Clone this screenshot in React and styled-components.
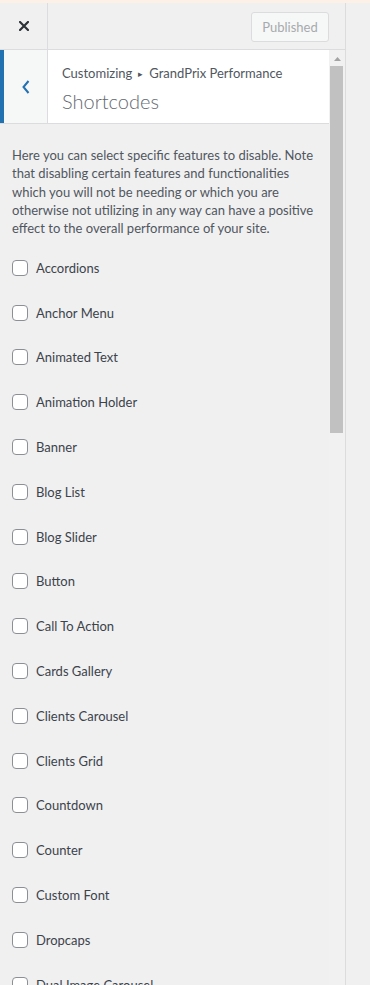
import React from "react";
import styled, { createGlobalStyle } from "styled-components";

const GlobalStyle = createGlobalStyle`
  html, body {
    margin: 0;
    padding: 0;
    background: #f0f0f1;
    overflow: hidden;
  }
  body {
    font-family: Lato, "Liberation Sans", sans-serif;
    -webkit-font-smoothing: antialiased;
  }
  * { box-sizing: border-box; }
`;

const Page = styled.div`
  display: flex;
  flex-direction: column;
  width: 370px;
  height: 985px;
  overflow: hidden;
  background: #f0f0f1;
`;

const TopStrip = styled.div`
  height: 3px;
  flex: none;
  background: #fcf0e7;
`;

const Main = styled.div`
  display: flex;
  flex: 1;
  min-height: 0;
`;

const Sidebar = styled.aside`
  width: 346px;
  flex: none;
  display: flex;
  flex-direction: column;
  border-right: 1px solid #dcdcde;
  background: #f0f0f1;
`;

const Preview = styled.div`
  flex: 1;
  background: #f0f0f1;
`;

const Header = styled.header`
  height: 47px;
  flex: none;
  display: flex;
  align-items: stretch;
  border-bottom: 1px solid #dcdcde;
`;

const CloseButton = styled.button`
  width: 48px;
  border: none;
  border-right: 1px solid #dcdcde;
  background: transparent;
  padding: 0;
  display: flex;
  align-items: center;
  justify-content: center;
  color: #1d2327;
  cursor: pointer;
`;

const HeaderActions = styled.div`
  flex: 1;
  display: flex;
  align-items: center;
  justify-content: flex-end;
  padding-right: 16px;
`;

const PublishedButton = styled.button`
  width: 78px;
  height: 30px;
  margin-top: 2px;
  border: 1px solid #dcdcde;
  border-radius: 3px;
  background: #f6f7f7;
  color: #a7aaad;
  font-family: inherit;
  font-size: 13px;
  padding: 0;
`;

const Body = styled.div`
  flex: 1;
  min-height: 0;
  display: flex;
`;

const Content = styled.div`
  width: 329px;
  flex: none;
  display: flex;
  flex-direction: column;
`;

const SectionTitle = styled.div`
  height: 74px;
  flex: none;
  display: flex;
  background: #fff;
  border-bottom: 1px solid #dcdcde;
`;

const BackButton = styled.button`
  width: 48px;
  flex: none;
  border: none;
  border-left: 4px solid #2271b1;
  border-right: 1px solid #dcdcde;
  background: #f6f7f7;
  display: flex;
  align-items: center;
  justify-content: center;
  padding: 0;
  color: #2271b1;
`;

const TitleText = styled.div`
  flex: 1;
  display: flex;
  flex-direction: column;
  justify-content: flex-start;
  padding: 14px 0 0 14px;
`;

const Breadcrumb = styled.span`
  font-size: 13px;
  line-height: 18px;
  color: #50575e;
`;

const Arrow = styled.span`
  font-size: 9px;
  margin: 0 6px 0 6px;
  position: relative;
  top: -1px;
`;

const Heading = styled.h3`
  margin: 4px 0 0;
  font-size: 20px;
  line-height: 26px;
  font-weight: 300;
  color: #646970;
`;

const Description = styled.p`
  margin: 22px 12px 8px;
  font-size: 13px;
  line-height: 18.3px;
  color: #50575e;
`;

const OptionList = styled.ul`
  list-style: none;
  margin: 0;
  padding: 0 12px;
`;

const Option = styled.li`
  height: 44.8px;
  display: flex;
  align-items: center;
`;

const Box = styled.span`
  width: 16px;
  height: 16px;
  flex: none;
  border: 1px solid #8c8f94;
  border-radius: 4px;
  background: #fff;
`;

const OptionLabel = styled.label`
  margin-left: 8px;
  font-size: 13px;
  color: #3c434a;
`;

const Scrollbar = styled.div`
  width: 16px;
  flex: none;
  display: flex;
  flex-direction: column;
  align-items: flex-start;
  background: #f1f1f1;
`;

const ScrollArrow = styled.div`
  width: 16px;
  height: 16px;
  flex: none;
  display: flex;
  align-items: center;
  justify-content: center;
  padding-top: 1px;
`;

const Thumb = styled.div`
  width: 13px;
  height: 367px;
  margin-left: 1px;
  background: #c1c1c1;
`;

const options = [
  "Accordions",
  "Anchor Menu",
  "Animated Text",
  "Animation Holder",
  "Banner",
  "Blog List",
  "Blog Slider",
  "Button",
  "Call To Action",
  "Cards Gallery",
  "Clients Carousel",
  "Clients Grid",
  "Countdown",
  "Counter",
  "Custom Font",
  "Dropcaps",
  "Dual Image Carousel",
];

export default function App() {
  return (
    <>
      <GlobalStyle />
      <Page>
        <TopStrip />
        <Main>
          <Sidebar>
            <Header>
              <CloseButton aria-label="Close">
                <svg width="10" height="10" viewBox="0 0 10 10">
                  <path d="M1 1 L9 9 M9 1 L1 9" stroke="#2c3338" strokeWidth="2.2" strokeLinecap="square" />
                </svg>
              </CloseButton>
              <HeaderActions>
                <PublishedButton disabled>Published</PublishedButton>
              </HeaderActions>
            </Header>
            <Body>
              <Content>
                <SectionTitle>
                  <BackButton aria-label="Back">
                    <svg width="8" height="14" viewBox="0 0 8 14">
                      <path d="M6.5 1 L1.5 7 L6.5 13" fill="none" stroke="#2271b1" strokeWidth="2" />
                    </svg>
                  </BackButton>
                  <TitleText>
                    <Breadcrumb>
                      Customizing<Arrow>▸</Arrow>GrandPrix Performance
                    </Breadcrumb>
                    <Heading>Shortcodes</Heading>
                  </TitleText>
                </SectionTitle>
                <Description>
                  Here you can select specific features to disable. Note that disabling certain features and
                  functionalities which you will not be needing or which you are otherwise not utilizing in any way
                  can have a positive effect to the overall performance of your site.
                </Description>
                <OptionList>
                  {options.map((o) => (
                    <Option key={o}>
                      <Box />
                      <OptionLabel>{o}</OptionLabel>
                    </Option>
                  ))}
                </OptionList>
              </Content>
              <Scrollbar>
                <ScrollArrow>
                  <svg width="7" height="4" viewBox="0 0 7 4">
                    <path d="M3.5 0 L7 4 L0 4 Z" fill="#a3a3a3" />
                  </svg>
                </ScrollArrow>
                <Thumb />
              </Scrollbar>
            </Body>
          </Sidebar>
          <Preview />
        </Main>
      </Page>
    </>
  );
}
